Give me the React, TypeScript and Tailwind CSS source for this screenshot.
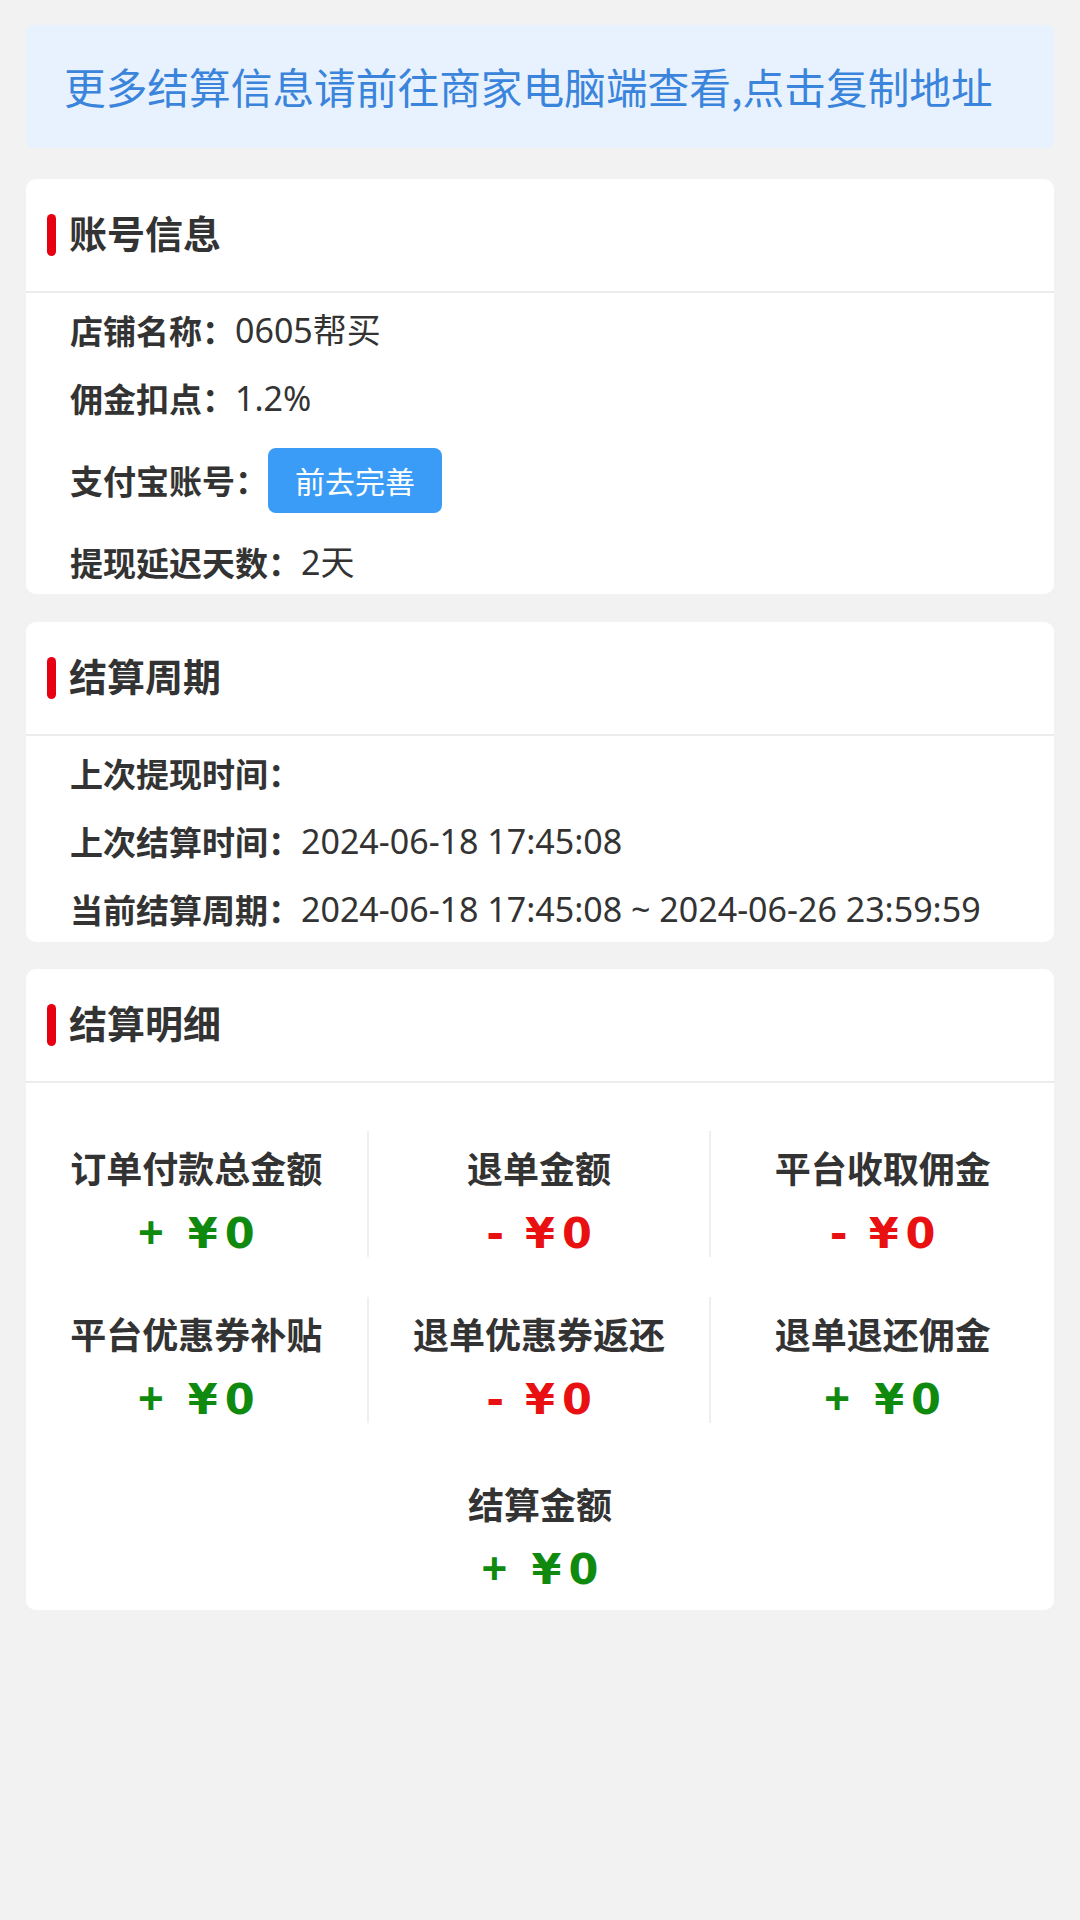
import React from "react";

const CJK = "font-['Noto_Sans_CJK_SC',sans-serif]";
const MIX = "font-['Noto_Sans','Noto_Sans_CJK_SC',sans-serif]";
const NUM = "font-['DejaVu_Sans','Noto_Sans_CJK_SC',sans-serif]";

function Header({ title }: { title: string }) {
  return (
    <div className="h-[114px] flex items-center border-b-2 border-[#ececec] pl-[21px]">
      <span className="w-[9px] h-[42px] rounded-full bg-[#e60012]" />
      <span className={`ml-[13px] mb-[6px] text-[38px] font-bold text-[#333333] leading-none ${CJK}`}>
        {title}
      </span>
    </div>
  );
}

function Row({ label, value }: { label: string; value?: string }) {
  return (
    <div className="flex items-center h-[38px]">
      <span className={`text-[33px] font-bold text-[#333333] leading-[38px] ${CJK}`}>{label}</span>
      {value ? (
        <span className={`text-[34px] text-[#333333] leading-[38px] ${MIX}`}>{value}</span>
      ) : null}
    </div>
  );
}

type Cell = { label: string; sign: "+" | "-"; divider: boolean; last?: boolean };

function Stat({ label, sign, divider, last }: Cell) {
  const color = sign === "+" ? "text-[#0f8a0f]" : "text-[#e81010]";
  return (
    <div
      className={`h-[126px] flex flex-col items-center pt-[14px] ${divider ? "border-r-2 border-[#efefef]" : ""} ${last ? "col-start-2 mt-[4px]" : ""}`}
    >
      <span className={`text-[36px] font-bold text-[#333333] leading-[44px] ${CJK}`}>{label}</span>
      <span className={`mt-[20px] text-[43px] font-bold leading-[48px] whitespace-nowrap ${NUM} ${color}`}>
        {sign === "+" ? (
          <span className="font-['Liberation_Sans',sans-serif] text-[44px]">+ </span>
        ) : (
          <span>- </span>
        )}
        <span className={sign === "+" ? "ml-[12px]" : "ml-[6px]"}>¥</span>
        <span className="ml-[7px]">0</span>
      </span>
    </div>
  );
}

export default function App() {
  const stats: Cell[] = [
    { label: "订单付款总金额", sign: "+", divider: true },
    { label: "退单金额", sign: "-", divider: true },
    { label: "平台收取佣金", sign: "-", divider: false },
    { label: "平台优惠券补贴", sign: "+", divider: true },
    { label: "退单优惠券返还", sign: "-", divider: true },
    { label: "退单退还佣金", sign: "+", divider: false },
    { label: "结算金额", sign: "+", divider: false, last: true },
  ];
  return (
    <div className="w-[1080px] min-h-[1920px] bg-[#f2f2f2] px-[26px] pt-[25px]">
      <div className="h-[123px] rounded-[6px] bg-[#e8f2fe] flex items-center pl-[38px]">
        <span className={`text-[41.7px] text-[#3a84db] leading-none ${CJK}`}>
          更多结算信息请前往商家电脑端查看,点击复制地址
        </span>
      </div>

      <div className="mt-[31px] bg-white rounded-[10px]">
        <Header title="账号信息" />
        <div className="pt-[18px] pb-[13px] pl-[44px] flex flex-col gap-[30px]">
          <Row label="店铺名称：" value="0605帮买" />
          <Row label="佣金扣点：" value="1.2%" />
          <div className="flex items-center h-[66px]">
            <span className={`text-[33px] font-bold text-[#333333] leading-[38px] ${CJK}`}>支付宝账号：</span>
            <button
              className={`h-[65px] px-[27px] rounded-[8px] bg-[#3a9cf6] text-white text-[30px] leading-none ${CJK}`}
            >
              前去完善
            </button>
          </div>
          <Row label="提现延迟天数：" value="2天" />
        </div>
      </div>

      <div className="mt-[28px] bg-white rounded-[10px]">
        <Header title="结算周期" />
        <div className="pt-[18px] pb-[14px] pl-[44px] flex flex-col gap-[30px]">
          <Row label="上次提现时间：" />
          <Row label="上次结算时间：" value="2024-06-18 17:45:08" />
          <Row label="当前结算周期：" value="2024-06-18 17:45:08 ~ 2024-06-26 23:59:59" />
        </div>
      </div>

      <div className="mt-[27px] bg-white rounded-[10px]">
        <Header title="结算明细" />
        <div className="grid grid-cols-3 gap-y-[40px] pt-[48px] pb-[17px]">
          {stats.map((s) => (
            <Stat key={s.label} {...s} />
          ))}
        </div>
      </div>
    </div>
  );
}
